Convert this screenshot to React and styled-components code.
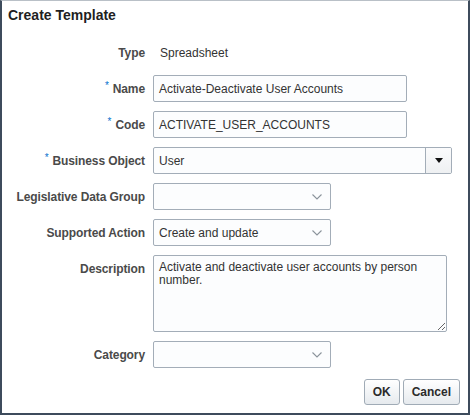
import styled, { createGlobalStyle } from "styled-components";

const GlobalStyle = createGlobalStyle`
  body {
    margin: 0;
    background: #ffffff;
    font-family: "Liberation Sans", Arial, sans-serif;
  }
`;

const Dialog = styled.div`
  box-sizing: border-box;
  width: 470px;
  height: 415px;
  background: #ffffff;
  border: 2px solid #3d4b5c;
  border-top: 1px solid #b9c0c7;
  display: flex;
  flex-direction: column;
`;

const Title = styled.h1`
  margin: 0;
  padding: 6px 6px 0 6px;
  font-size: 14px;
  line-height: 16px;
  font-weight: bold;
  color: #1f1f1f;
`;

const Form = styled.div`
  margin-top: 16px;
  display: grid;
  grid-template-columns: 143px 1fr;
  column-gap: 8px;
  row-gap: 9px;
`;

const Label = styled.div`
  display: flex;
  justify-content: flex-end;
  align-items: ${(p) => (p.$top ? "flex-start" : "center")};
  padding-top: ${(p) => (p.$top ? "7px" : "0")};
  font-size: 12px;
  letter-spacing: -0.1px;
  font-weight: bold;
  color: #4a4a4a;
  white-space: nowrap;
`;

const Star = styled.span`
  color: #0572ce;
  font-size: 10px;
  font-weight: normal;
  align-self: flex-start;
  margin-top: ${(p) => (p.$top ? "-2px" : "5px")};
  margin-right: 4px;
`;

const StaticText = styled.div`
  height: 27px;
  display: flex;
  align-items: center;
  padding-left: 7px;
  font-size: 12px;
  color: #333333;
`;

const Field = styled.div`
  box-sizing: border-box;
  width: ${(p) => p.$w}px;
  height: 27px;
  display: flex;
  align-items: center;
  border: 1px solid #a3adb8;
  border-radius: 2px;
  background: #fcfdfe;
  font-size: 12px;
  color: #333333;
  overflow: hidden;
`;

const FieldText = styled.span`
  flex: 1;
  padding-left: 5px;
  white-space: nowrap;
`;

const Chevron = styled.span`
  display: flex;
  align-items: center;
  margin-right: 8px;
`;

const DropButton = styled.span`
  box-sizing: border-box;
  width: 26px;
  height: 100%;
  display: flex;
  align-items: center;
  justify-content: center;
  border-left: 1px solid #a3adb8;
  background: linear-gradient(#fbfbfc, #eef0f2);
`;

const TextArea = styled.textarea`
  box-sizing: border-box;
  width: 294px;
  height: 77px;
  margin: 0;
  padding: 5px 5px;
  border: 1px solid #a3adb8;
  border-radius: 2px;
  background: #fcfdfe;
  font-family: "Liberation Sans", Arial, sans-serif;
  font-size: 12px;
  line-height: 13px;
  color: #333333;
  resize: both;
  outline: none;
  display: block;
`;

const Actions = styled.div`
  margin-top: 11px;
  padding-right: 8px;
  display: flex;
  justify-content: flex-end;
  gap: 3px;
`;

const Button = styled.button`
  box-sizing: border-box;
  height: 26px;
  padding: 0 8px;
  border: 1px solid #a0abb6;
  border-radius: 3px;
  background: linear-gradient(#ffffff, #e6eaee);
  font-family: "Liberation Sans", Arial, sans-serif;
  font-size: 12px;
  font-weight: bold;
  color: #2b2b2b;
`;

const ChevronIcon = () => (
  <svg width="10" height="6" viewBox="0 0 10 6">
    <polyline points="0.5,0.5 5,5 9.5,0.5" fill="none" stroke="#8c949c" strokeWidth="1.1" />
  </svg>
);

const TriangleIcon = () => (
  <svg width="8" height="5" viewBox="0 0 8 5">
    <polygon points="0,0 8,0 4,5" fill="#111" />
  </svg>
);

const Choice = ({ value }) => (
  <Field $w={178}>
    <FieldText>{value}</FieldText>
    <Chevron>
      <ChevronIcon />
    </Chevron>
  </Field>
);

const RowLabel = ({ children, required, top }) => (
  <Label $top={top}>
    {required && <Star>*</Star>}
    {children}
  </Label>
);

export default function App() {
  return (
    <>
      <GlobalStyle />
      <Dialog>
        <Title>Create Template</Title>
        <Form>
          <RowLabel>Type</RowLabel>
          <StaticText>Spreadsheet</StaticText>

          <RowLabel required>Name</RowLabel>
          <Field $w={254}>
            <FieldText>Activate-Deactivate User Accounts</FieldText>
          </Field>

          <RowLabel required>Code</RowLabel>
          <Field $w={254}>
            <FieldText>ACTIVATE_USER_ACCOUNTS</FieldText>
          </Field>

          <RowLabel required>Business Object</RowLabel>
          <Field $w={299}>
            <FieldText>User</FieldText>
            <DropButton>
              <TriangleIcon />
            </DropButton>
          </Field>

          <RowLabel>Legislative Data Group</RowLabel>
          <Choice value="" />

          <RowLabel>Supported Action</RowLabel>
          <Choice value="Create and update" />

          <RowLabel top>Description</RowLabel>
          <TextArea
            readOnly
            value="Activate and deactivate user accounts by person number."
          />

          <RowLabel>Category</RowLabel>
          <Choice value="" />
        </Form>
        <Actions>
          <Button>OK</Button>
          <Button>Cancel</Button>
        </Actions>
      </Dialog>
    </>
  );
}
